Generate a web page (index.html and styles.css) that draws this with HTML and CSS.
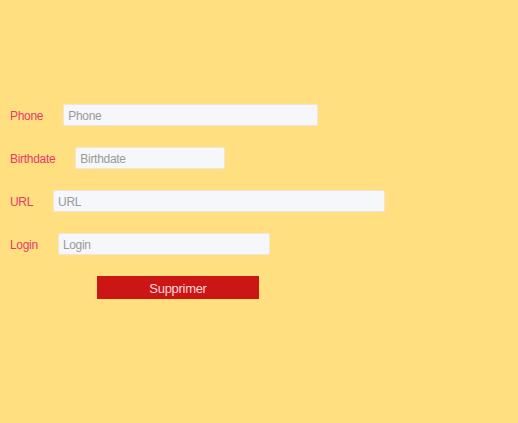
FILE: index.html
```html
<!DOCTYPE html>
<html>
<head>
<meta charset="utf-8">
<link rel="stylesheet" href="styles.css">
</head>
<body>
<form class="form">
  <div class="row"><label class="lbl">Phone</label><input class="field w-phone" placeholder="Phone"></div>
  <div class="row"><label class="lbl">Birthdate</label><input class="field w-birth" placeholder="Birthdate"></div>
  <div class="row"><label class="lbl">URL</label><input class="field w-url" placeholder="URL"></div>
  <div class="row"><label class="lbl">Login</label><input class="field w-login" placeholder="Login"></div>
  <div class="actions"><button type="button" class="btn">Supprimer</button></div>
</form>
</body>
</html>
```
FILE: styles.css
```css
html, body {
  margin: 0;
  padding: 0;
  background: #ffdf80;
  height: 100%;
}
body {
  font-family: "Liberation Sans", Arial, sans-serif;
}
.form {
  display: flex;
  flex-direction: column;
  gap: 21px;
  padding: 104px 0 0 10px;
}
.row {
  display: flex;
  align-items: center;
  height: 22px;
}
.lbl {
  color: #e83a6a;
  font-size: 12px;
  letter-spacing: -0.3px;
  margin-right: 20px;
  padding-top: 2px;
}
.field {
  box-sizing: border-box;
  height: 22px;
  margin: 0;
  padding: 1px 4px 0;
  border: 1px solid #efe6d6;
  border-radius: 2px;
  background: #f5f7fa;
  font-family: "Liberation Sans", Arial, sans-serif;
  font-size: 12px;
  letter-spacing: -0.3px;
  color: #555;
  outline: none;
}
.field::placeholder {
  color: #9a9a9a;
}
.w-phone { width: 255px; }
.w-birth { width: 150px; }
.w-url { width: 332px; }
.w-login { width: 212px; }
.actions {
  display: flex;
  padding-left: 87px;
}
.btn {
  width: 162px;
  height: 23px;
  margin: 0;
  padding: 1px 0 0;
  border: none;
  background: #cc1515;
  color: #ffd6dc;
  font-family: "Liberation Sans", Arial, sans-serif;
  font-size: 13px;
  letter-spacing: -0.3px;
}
```
